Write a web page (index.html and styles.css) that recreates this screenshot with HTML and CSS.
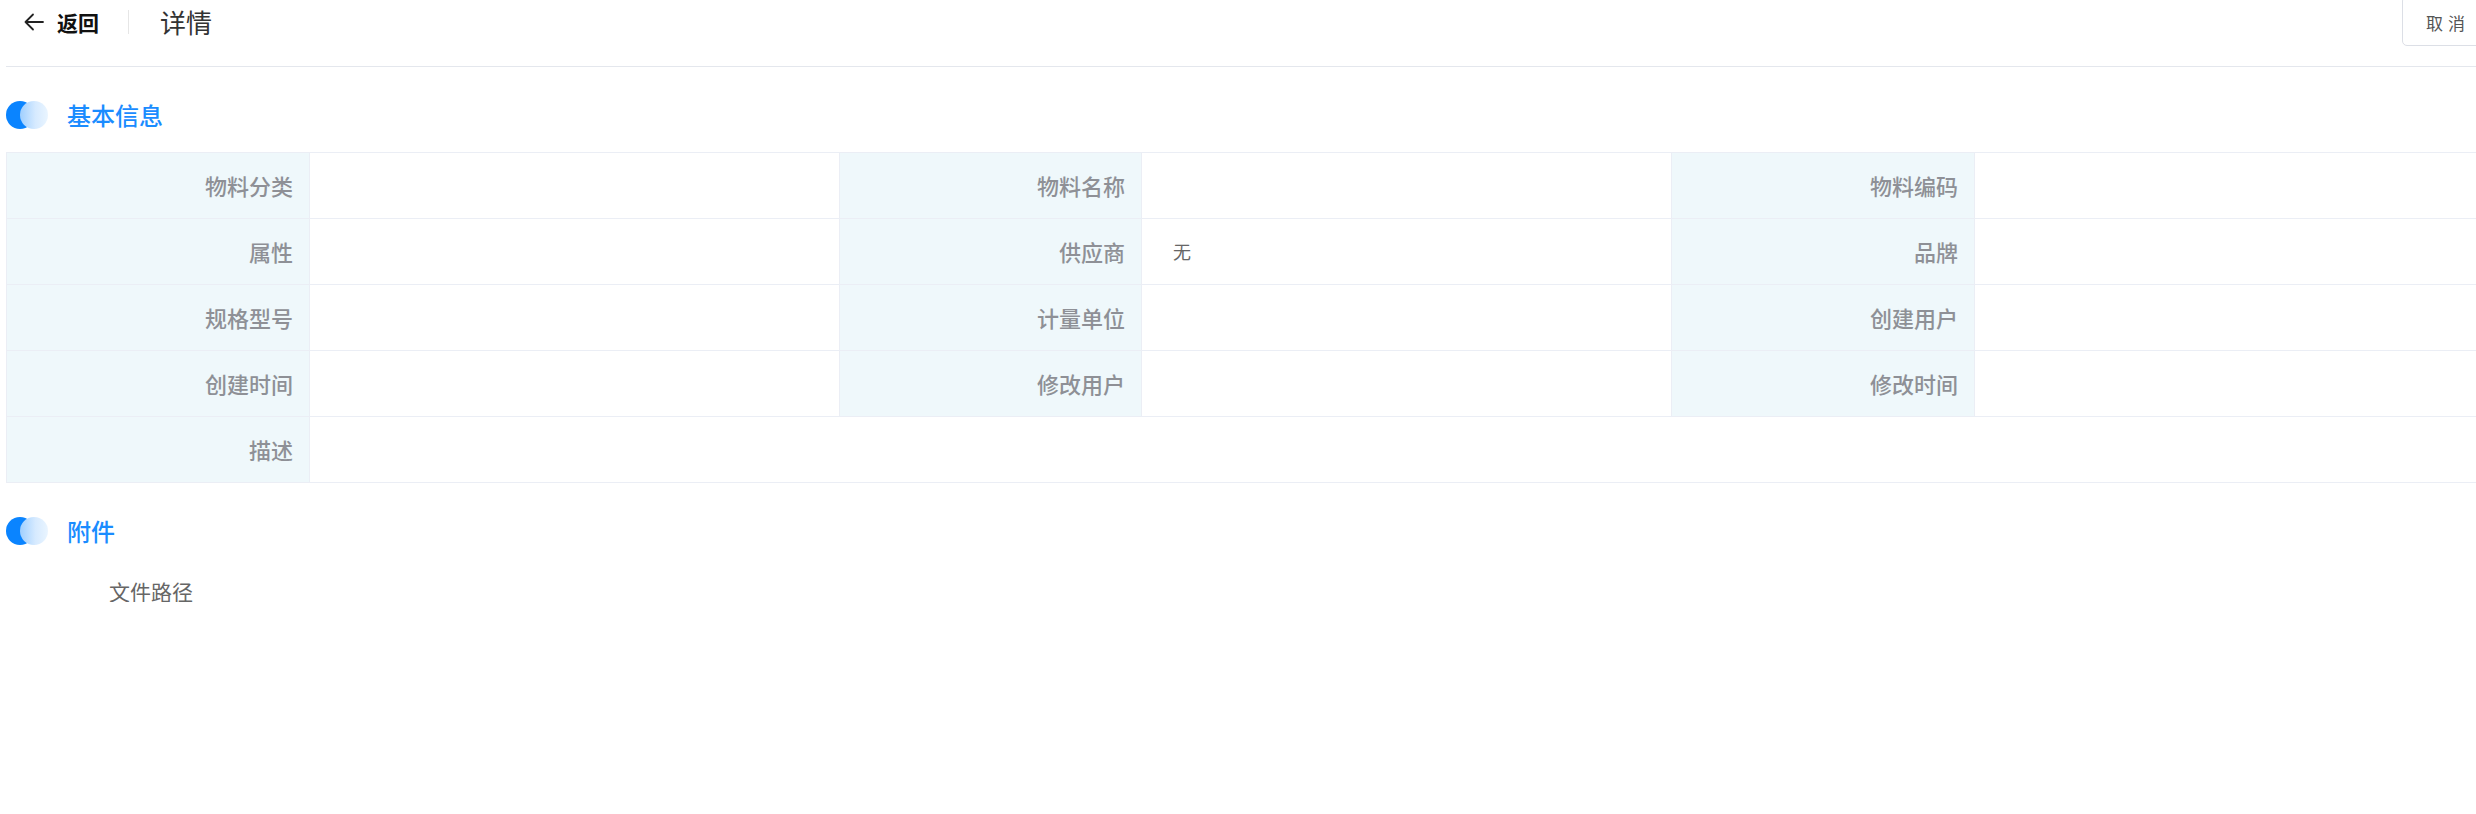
FILE: index.html
```html
<!DOCTYPE html>
<html lang="zh-CN">
<head>
<meta charset="utf-8">
<title>详情</title>
<link rel="stylesheet" href="styles.css">
</head>
<body>
<div class="page">
  <header class="topbar">
    <div class="back">
      <svg class="back-icon" width="20" height="18" viewBox="0 0 20 18"><path d="M9 1.5 L1.5 9 L9 16.5 M1.5 9 H19" fill="none" stroke="#222" stroke-width="1.8" stroke-linecap="round" stroke-linejoin="round"/></svg>
      <span class="back-text">返回</span>
    </div>
    <span class="divider"></span>
    <h1 class="title">详情</h1>
    <button class="cancel">取消</button>
  </header>

  <section class="section">
    <div class="section-head">
      <span class="dot"><span class="dot-a"></span><span class="dot-b"></span></span>
      <span class="section-title">基本信息</span>
    </div>
    <div class="grid">
      <div class="lbl">物料分类</div><div class="val"></div>
      <div class="lbl">物料名称</div><div class="val"></div>
      <div class="lbl">物料编码</div><div class="val"></div>
      <div class="lbl">属性</div><div class="val"></div>
      <div class="lbl">供应商</div><div class="val">无</div>
      <div class="lbl">品牌</div><div class="val"></div>
      <div class="lbl">规格型号</div><div class="val"></div>
      <div class="lbl">计量单位</div><div class="val"></div>
      <div class="lbl">创建用户</div><div class="val"></div>
      <div class="lbl">创建时间</div><div class="val"></div>
      <div class="lbl">修改用户</div><div class="val"></div>
      <div class="lbl">修改时间</div><div class="val"></div>
      <div class="lbl">描述</div><div class="val wide"></div>
    </div>
  </section>

  <section class="section">
    <div class="section-head">
      <span class="dot"><span class="dot-a"></span><span class="dot-b"></span></span>
      <span class="section-title">附件</span>
    </div>
    <div class="file-label">文件路径</div>
  </section>
</div>
</body>
</html>
```

FILE: styles.css
```css
html, body {
  margin: 0;
  padding: 0;
  overflow: hidden;
  background: #fff;
}
body {
  font-family: "Noto Sans CJK SC", "Noto Sans", sans-serif;
  color: #333;
}
.page {
  width: 2505px;
  padding-left: 6px;
  box-sizing: border-box;
}
.topbar {
  display: flex;
  align-items: center;
  height: 44px;
  padding-bottom: 22px;
  border-bottom: 1px solid #e4e7ed;
  padding-left: 18px;
  position: relative;
}
.back {
  display: flex;
  align-items: center;
  gap: 13px;
}
.back-icon {
  display: block;
}
.back-text {
  font-size: 21px;
  font-weight: 700;
  color: #111;
  line-height: 1;
}
.divider {
  width: 1px;
  height: 24px;
  background: #e6e6e6;
  margin-left: 29px;
  margin-right: 31px;
}
.title {
  margin: 0;
  font-size: 26px;
  font-weight: 400;
  color: #333;
  line-height: 1;
}
.cancel {
  position: absolute;
  left: 2396px;
  top: -4px;
  height: 50px;
  width: 100px;
  background: #fff;
  border: 1px solid #dcdfe6;
  border-radius: 5px;
  font-family: "Noto Sans CJK SC", sans-serif;
  font-size: 17px;
  letter-spacing: 5px;
  color: #555;
  padding: 3px 0 0 23px;
  text-align: left;
}
.section-head {
  display: flex;
  align-items: center;
  height: 28px;
  margin-top: 34px;
  margin-bottom: 23px;
}
.dot {
  position: relative;
  width: 42px;
  height: 28px;
  flex: none;
}
.dot-a, .dot-b {
  position: absolute;
  top: 0;
  width: 28px;
  height: 28px;
  border-radius: 50%;
}
.dot-a {
  left: 0;
  background: #0a84ff;
}
.dot-b {
  left: 14px;
  background: linear-gradient(90deg, #9fcfff 0%, #d6eaff 55%, #eaf5ff 100%);
}
.section-title {
  margin-left: 19px;
  font-size: 24px;
  font-weight: 500;
  color: #1a8cff;
  line-height: 1;
}
.grid {
  display: grid;
  grid-template-columns: 303px 530px 302px 530px 303px 530px;
  grid-auto-rows: 66px;
  border-top: 1px solid #ebeef5;
  border-left: 1px solid #ebeef5;
  box-sizing: border-box;
}
.lbl, .val {
  border-right: 1px solid #ebeef5;
  border-bottom: 1px solid #ebeef5;
  display: flex;
  align-items: center;
  padding-bottom: 2px;
  box-sizing: border-box;
}
.lbl {
  background: #eff8fb;
  justify-content: flex-end;
  padding-right: 16px;
  font-size: 22px;
  font-weight: 500;
  color: #8e9096;
}
.val {
  background: #fff;
  padding-left: 31px;
  font-size: 18px;
  font-weight: 400;
  color: #666;
}
.val.wide {
  grid-column: span 5;
}
.file-label {
  margin-top: 36px;
  padding-left: 103px;
  font-size: 21px;
  color: #666;
  line-height: 1;
}
```
